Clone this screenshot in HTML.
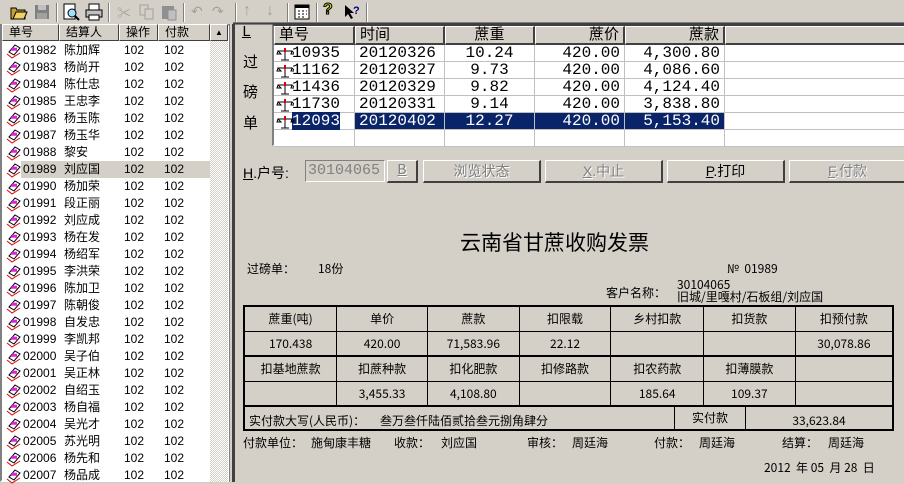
<!DOCTYPE html>
<html><head><meta charset="utf-8">
<style>
*{margin:0;padding:0;box-sizing:border-box}
body{width:904px;height:482px;overflow:hidden;background:#d4d0c8;position:relative;font-family:"Liberation Sans","WenQuanYi Zen Hei","Noto Sans CJK SC",sans-serif;font-size:12px;color:#000}
.a{position:absolute;white-space:nowrap}
.tb{position:absolute;top:3px;width:18px;height:18px}
.sep{position:absolute;top:3px;width:2px;height:19px;border-left:1px solid #808080;border-right:1px solid #fff}
.hd{position:absolute;height:17px;background:#d4d0c8;border-top:1px solid #fff;border-left:1px solid #fff;border-right:1px solid #404040;border-bottom:1px solid #404040;padding-left:6px;line-height:15px;font-size:12px}
.row{position:absolute;left:2px;width:208px;height:17px;line-height:17px;font-size:12px}
.row span{position:absolute}
.mono{font-family:"Liberation Mono","WenQuanYi Zen Hei",monospace;font-size:16px}
.gh{position:absolute;top:26px;height:19px;background:#d4d0c8;border-top:1px solid #fff;border-left:1px solid #fff;border-right:2px solid #404040;border-bottom:2px solid #404040;font-size:15px;line-height:16px;padding:0 4px}
.gr{position:absolute;height:17px;line-height:17px;font-family:"Liberation Mono",monospace;font-size:16px}
.gr div{position:absolute;top:0;height:17px;padding:0 4px;border-right:1px solid #c0c0c0;border-bottom:1px solid #c0c0c0}
.btn{position:absolute;top:160px;height:23px;border-top:1px solid #fff;border-left:1px solid #fff;border-right:2px solid #404040;border-bottom:2px solid #404040;text-align:center;line-height:20px;font-size:14px;color:#808080;text-shadow:1px 1px 0 #fff}
table{border-collapse:collapse;position:absolute;left:243px;top:305px;width:651px;font-size:12px;font-family:"WenQuanYi Zen Hei","Noto Sans CJK SC",sans-serif}
td{border:1px solid #000;height:25px;text-align:center;padding:0}
.inv{font-family:"WenQuanYi Zen Hei","Noto Sans CJK SC",sans-serif;font-size:12px}
</style></head><body>

<!-- toolbar -->
<div class="a" style="left:0;top:0;width:904px;height:25px;border-bottom:1px solid #808080"></div>
<svg class="tb" style="left:10px" viewBox="0 0 18 18"><path d="M1 5h5l1 2h8v9H1z" fill="#c8a030" stroke="#000"/><path d="M3 16l3-7h11l-3 7z" fill="#f0d060" stroke="#000"/></svg>
<svg class="tb" style="left:33px" viewBox="0 0 18 18"><rect x="2" y="2" width="14" height="14" fill="#808080"/><rect x="5" y="2" width="8" height="5" fill="#c0c0c0"/><rect x="4" y="10" width="10" height="6" fill="#a0a0a0"/></svg>
<div class="sep" style="left:56px"></div>
<svg class="tb" style="left:62px" viewBox="0 0 18 18"><rect x="2" y="1" width="11" height="15" fill="#fff" stroke="#000"/><circle cx="10" cy="10" r="4" fill="#a0e0ff" stroke="#000"/><path d="M13 13l4 4" stroke="#000" stroke-width="2"/></svg>
<svg class="tb" style="left:85px" viewBox="0 0 18 18"><rect x="4" y="1" width="10" height="6" fill="#fff" stroke="#000"/><path d="M1 7h16v7H1z" fill="#c0c0c0" stroke="#000"/><rect x="4" y="12" width="10" height="5" fill="#fff" stroke="#000"/></svg>
<div class="sep" style="left:108px"></div>
<div class="a" style="left:117px;top:3px;color:#a0a0a0;font-size:14px">✂</div>
<svg class="tb" style="left:138px" viewBox="0 0 18 18"><rect x="2" y="2" width="8" height="10" fill="none" stroke="#a0a0a0"/><rect x="7" y="6" width="8" height="10" fill="#d4d0c8" stroke="#a0a0a0"/></svg>
<svg class="tb" style="left:160px" viewBox="0 0 18 18"><rect x="2" y="3" width="12" height="13" fill="#909090"/><rect x="8" y="7" width="8" height="10" fill="#c0c0c0" stroke="#909090"/></svg>
<div class="sep" style="left:183px"></div>
<div class="a" style="left:191px;top:3px;color:#a0a0a0;font-size:14px">↶</div>
<div class="a" style="left:212px;top:3px;color:#a0a0a0;font-size:14px">↷</div>
<div class="sep" style="left:235px"></div>
<div class="a" style="left:243px;top:2px;color:#a0a0a0;font-size:16px">↑</div>
<div class="a" style="left:266px;top:2px;color:#a0a0a0;font-size:16px">↓</div>
<div class="sep" style="left:287px"></div>
<svg class="tb" style="left:293px" viewBox="0 0 18 18"><rect x="2" y="2" width="14" height="14" fill="#fff" stroke="#000"/><rect x="2" y="2" width="14" height="3" fill="#000"/><path d="M5 8h2M9 8h2M13 8h1M5 11h2M9 11h2M13 11h1M5 14h2M9 14h2" stroke="#000"/></svg>
<div class="sep" style="left:316px"></div>
<div class="a" style="left:323px;top:1px;color:#e0e000;font-weight:bold;font-size:16px;-webkit-text-stroke:1px #000">?</div>
<svg class="tb" style="left:343px" viewBox="0 0 18 18"><path d="M2 2v12l3-3 3 5 2-1-3-5h4z" fill="#000"/><text x="10" y="11" font-size="11" font-weight="bold" fill="#000080" font-family="Liberation Sans">?</text></svg>
<div class="sep" style="left:366px"></div>

<!-- left list -->
<div class="a" style="left:0;top:24px;width:230px;height:458px;background:#fff;border:2px solid;border-color:#808080 #fff #fff #808080"></div>
<div class="a" style="left:210px;top:41px;width:18px;height:441px;background:repeating-conic-gradient(#fff 0 25%,#d4d0c8 0 50%) 0 0/2px 2px"></div>
<div class="hd" style="left:2px;top:24px;width:57px">单号</div>
<div class="hd" style="left:59px;top:24px;width:60px">结算人</div>
<div class="hd" style="left:119px;top:24px;width:39px">操作</div>
<div class="hd" style="left:158px;top:24px;width:52px">付款</div>
<div class="hd" style="left:210px;top:24px;width:18px;padding:0;text-align:center;font-size:8px">▲</div>
<div class="a" style="left:229px;top:24px;width:4px;height:458px;border-left:1px solid #808080;border-right:1px solid #404040;background:#d4d0c8"></div>
<div id="list"></div>

<!-- right: grid -->
<div class="a" style="left:233px;top:22px;width:671px;height:2px;border-top:1px solid #808080;border-bottom:1px solid #404040"></div>
<div class="a" style="left:233px;top:24px;width:2px;height:458px;background:#404040"></div>
<div class="a mono" style="left:242px;top:24px;font-size:15px;text-decoration:underline">L</div>
<div class="a" style="left:243px;top:51px;font-size:15px">过</div>
<div class="a" style="left:243px;top:81px;font-size:15px">磅</div>
<div class="a" style="left:243px;top:112px;font-size:15px">单</div>
<div class="a" style="left:272px;top:24px;width:632px;height:122px;background:#fff;border-top:2px solid #404040;border-left:2px solid #808080;border-bottom:1px solid #fff"></div>
<div class="gh" style="left:274px;width:81px">单号</div>
<div class="gh" style="left:355px;width:90px">时间</div>
<div class="gh" style="left:445px;width:90px;text-align:center">蔗重</div>
<div class="gh" style="left:535px;width:90px;text-align:right">蔗价</div>
<div class="gh" style="left:625px;width:100px;text-align:right">蔗款</div>
<div class="gh" style="left:725px;width:179px;border-right:none"></div>
<div id="grid"></div>

<!-- buttons row -->
<div class="a" style="left:243px;top:163px;font-size:14px"><u>H</u>.户号:</div>
<div class="a mono" style="left:305px;top:160px;width:80px;height:22px;border:1px solid #808080;border-right-color:#fff;border-bottom-color:#fff;color:#808080;font-size:15px;line-height:20px;padding-left:2px">30104065</div>
<div class="btn mono" style="left:387px;width:31px;font-size:15px"><u>B</u></div>
<div class="btn" style="left:423px;width:118px">浏览状态</div>
<div class="btn" style="left:545px;width:118px"><u>X</u>.中止</div>
<div class="btn" style="left:667px;width:118px;color:#000;text-shadow:none"><u>P</u>.打印</div>
<div class="btn" style="left:789px;width:118px"><u>F</u>.付款</div>

<!-- invoice -->
<div class="a" style="left:460px;top:227px;font-size:21px;font-family:'WenQuanYi Zen Hei','Noto Sans CJK SC',sans-serif">云南省甘蔗收购发票</div>
<div class="a inv" style="left:247px;top:260px">过磅单：</div>
<div class="a inv" style="left:318px;top:260px">18份</div>
<div class="a inv" style="left:727px;top:260px">№&nbsp;&nbsp;01989</div>
<div class="a inv" style="left:606px;top:284px">客户名称：</div>
<div class="a inv" style="left:677px;top:279px;line-height:12px">30104065<br>旧城/里嘎村/石板组/刘应国</div>

<table>
<colgroup><col style="width:93px"><col style="width:91px"><col style="width:92px"><col style="width:92px"><col style="width:93px"><col style="width:92px"><col style="width:98px"></colgroup>
<tr style="border-top:2px solid #000"><td style="border-left:2px solid #000">蔗重(吨)</td><td>单价</td><td>蔗款</td><td>扣限载</td><td>乡村扣款</td><td>扣货款</td><td style="border-right:2px solid #000">扣预付款</td></tr>
<tr style="border-bottom:2px solid #000"><td style="border-left:2px solid #000">170.438</td><td>420.00</td><td>71,583.96</td><td>22.12</td><td></td><td></td><td style="border-right:2px solid #000">30,078.86</td></tr>
<tr><td style="border-left:2px solid #000">扣基地蔗款</td><td>扣蔗种款</td><td>扣化肥款</td><td>扣修路款</td><td>扣农药款</td><td>扣薄膜款</td><td style="border-right:2px solid #000"></td></tr>
<tr style="border-bottom:2px solid #000"><td style="border-left:2px solid #000"></td><td>3,455.33</td><td>4,108.80</td><td></td><td>185.64</td><td>109.37</td><td style="border-right:2px solid #000"></td></tr>
<tr style="border-bottom:2px solid #000"><td colspan="7" style="border-left:2px solid #000;border-right:2px solid #000;height:24px;position:relative;text-align:left">
<span class="a" style="left:4px;top:5px">实付款大写(人民币)：</span>
<span class="a" style="left:135px;top:5px">叁万叁仟陆佰贰拾叁元捌角肆分</span>
<span class="a" style="left:429px;top:0;height:22px;width:72px;border-left:1px solid #000;border-right:1px solid #000;text-align:center;line-height:22px">实付款</span>
<span class="a" style="left:501px;top:5px;width:146px;text-align:center">33,623.84</span>
</td></tr>
</table>
<div class="a inv" style="left:243px;top:434px">付款单位：</div>
<div class="a inv" style="left:311px;top:434px">施甸康丰糖</div>
<div class="a inv" style="left:394px;top:434px">收款：</div>
<div class="a inv" style="left:441px;top:434px">刘应国</div>
<div class="a inv" style="left:527px;top:434px">审核：</div>
<div class="a inv" style="left:572px;top:434px">周廷海</div>
<div class="a inv" style="left:654px;top:434px">付款：</div>
<div class="a inv" style="left:699px;top:434px">周廷海</div>
<div class="a inv" style="left:782px;top:434px">结算：</div>
<div class="a inv" style="left:828px;top:434px">周廷海</div>
<div class="a inv" style="left:764px;top:459px">2012&nbsp;&nbsp;年&nbsp;05&nbsp;&nbsp;月&nbsp;28&nbsp;&nbsp;日</div>

<script>
var names=["陈加辉","杨尚开","陈仕忠","王忠李","杨玉陈","杨玉华","黎安","刘应国","杨加荣","段正丽","刘应成","杨在发","杨绍军","李洪荣","陈加卫","陈朝俊","自发忠","李凯邦","吴子伯","吴正林","自绍玉","杨自福","吴光才","苏光明","杨先和","杨品成"];
var icon='<svg width="16" height="16" viewBox="0 0 16 16" style="position:absolute;left:4px;top:1px"><path d="M3 9l6-7 5 3-6 7z" fill="#fff" stroke="#000"/><path d="M5 7h6M6 5.5h5" stroke="#e020e0" stroke-width="1.5"/><path d="M1 11l5 4 8-5" fill="none" stroke="#e00000"/></svg>';
var h='';
for(var i=0;i<names.length;i++){var n=1982+i;var s=(n<2000?"0":"0")+n;var y=42+17*i;
h+='<div class="row" style="top:'+y+'px">'+icon+(i==7?'<div style="position:absolute;left:19px;top:0;width:189px;height:17px;background:#d4d0c8"></div>':'')+'<span style="left:21px">'+('0'+n).slice(-5)+'</span><span style="left:62px">'+names[i]+'</span><span style="left:122px">102</span><span style="left:162px">102</span></div>';}
document.getElementById('list').innerHTML=h;
var g=[["10935","20120326","10.24","420.00","4,300.80"],["11162","20120327","9.73","420.00","4,086.60"],["11436","20120329","9.82","420.00","4,124.40"],["11730","20120331","9.14","420.00","3,838.80"],["12093","20120402","12.27","420.00","5,153.40"],["","","","",""]];
var sc='<svg width="18" height="16" viewBox="0 0 18 16" style="position:absolute;left:2px;top:1px"><path d="M2 5h14M9 2v12M5 14h8M2 5l-1 3h4zM16 5l-1 3h4z" stroke="#000" fill="none"/><path d="M9 2v4" stroke="#e00000" stroke-width="2"/></svg>';
h='';
for(var i=0;i<g.length;i++){var y=45+17*i;var sel=i==4;var st=sel?'background:#0a246a;color:#fff;':'';
h+='<div class="gr" style="top:'+y+'px;left:274px;width:630px">'+
'<div style="left:0;width:81px;padding-left:18px">'+(g[i][0]?sc:'')+'<span style="'+st+'">'+g[i][0]+'</span></div>'+
'<div style="left:81px;width:90px;'+st+'">'+g[i][1]+'</div>'+
'<div style="left:171px;width:90px;text-align:center;'+st+'">'+g[i][2]+'</div>'+
'<div style="left:261px;width:90px;text-align:right;'+st+'">'+g[i][3]+'</div>'+
'<div style="left:351px;width:100px;text-align:right;'+st+'">'+g[i][4]+'</div>'+
'<div style="left:451px;width:179px;border-right:none"></div></div>';}
document.getElementById('grid').innerHTML=h;
</script>
</body></html>
